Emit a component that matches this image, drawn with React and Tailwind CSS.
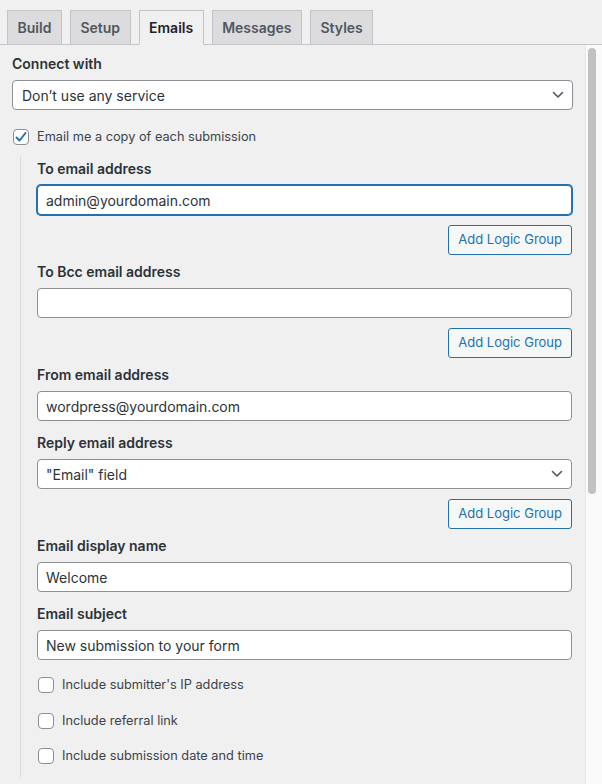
import React from 'react';

const tabs = ['Build', 'Setup', 'Emails', 'Messages', 'Styles'];

const Chevron = () => (
  <svg width="12" height="8" viewBox="0 0 12 8" fill="none" className="absolute right-[8px] top-1/2 -translate-y-1/2">
    <path d="M1.5 1.5 L6 6 L10.5 1.5" stroke="#50575e" strokeWidth="1.6" strokeLinecap="round" strokeLinejoin="round" />
  </svg>
);

const Label = ({ children }) => (
  <div className="text-[14px] leading-[20px] font-semibold text-[#2c3338]">{children}</div>
);

const TextField = ({ value, focused }) => (
  <div
    className={
      focused
        ? 'mt-[6px] h-[30px] rounded-[4px] border border-[#2271b1] ring-1 ring-[#2271b1] bg-white px-[8px] flex items-center text-[14px] text-[#2c3338]'
        : 'mt-[6px] h-[30px] rounded-[4px] border border-[#8c8f94] bg-white px-[8px] flex items-center text-[14px] text-[#2c3338]'
    }
  >
    {value}
  </div>
);

const SelectField = ({ value, pad = 'px-[8px]' }) => (
  <div className={`relative mt-[6px] h-[30px] rounded-[4px] border border-[#8c8f94] bg-white ${pad} flex items-center text-[14px] text-[#2c3338]`}>
    {value}
    <Chevron />
  </div>
);

const LogicButton = () => (
  <div className="flex justify-end mt-[10px]">
    <button className="h-[30px] px-[9px] rounded-[3px] border border-[#2271b1] bg-[#f6f7f7] text-[13px] text-[#2271b1]">
      Add Logic Group
    </button>
  </div>
);

const Checkbox = ({ checked }) => (
  <span className="w-[16px] h-[16px] shrink-0 rounded-[4px] border border-[#8c8f94] bg-white flex items-center justify-center">
    {checked && (
      <svg width="14" height="14" viewBox="0 0 14 14" fill="none">
        <path d="M2.5 7.5 L5.6 10.5 L11.5 3" stroke="#2271b1" strokeWidth="2" strokeLinecap="round" strokeLinejoin="round" />
      </svg>
    )}
  </span>
);

const CheckRow = ({ label, checked, className = '' }) => (
  <label className={`flex items-center gap-[8px] h-[20px] ${className}`}>
    <Checkbox checked={checked} />
    <span className="text-[12.75px] text-[#3c434a]">{label}</span>
  </label>
);

export default function App() {
  return (
    <div className="w-[602px] h-[784px] bg-[#f0f0f1] overflow-hidden flex flex-col font-['Inter',sans-serif]">
      {/* Tabs */}
      <div className="flex gap-[8px] pl-[7px] pt-[10px] border-b border-[#c3c4c7] shrink-0">
        {tabs.map((t) => (
          <div
            key={t}
            className={
              t === 'Emails'
                ? 'h-[35px] -mb-px px-[9.5px] flex items-center border border-[#c3c4c7] border-b-[#f0f0f1] bg-[#f0f0f1] text-[14px] font-semibold text-[#1d2327]'
                : 'h-[35px] -mb-px px-[9.5px] flex items-center border border-[#c3c4c7] bg-[#dcdcde] text-[14px] font-semibold text-[#50575e]'
            }
          >
            {t}
          </div>
        ))}
      </div>

      <div className="flex flex-1 min-h-0">
        {/* Form */}
        <div className="flex-1 pl-[12px] pr-[12px] pt-[9px]">
          <Label>Connect with</Label>
          <SelectField value="Don’t use any service" pad="pl-[9px] pr-[8px]" />
          <CheckRow className="mt-[17px] pl-[1px]" checked label="Email me a copy of each submission" />

          <div className="ml-[8px] mr-[1px] mt-[9px] border-l border-[#dcdcde] pl-[16px] pt-[3px] pb-[11px]">
            <Label>To email address</Label>
            <TextField value="admin@yourdomain.com" focused />
            <LogicButton />

            <div className="mt-[7px]">
              <Label>To Bcc email address</Label>
              <TextField value="" />
              <LogicButton />
            </div>

            <div className="mt-[7px]">
              <Label>From email address</Label>
              <TextField value="wordpress@yourdomain.com" />
            </div>

            <div className="mt-[12px]">
              <Label>Reply email address</Label>
              <SelectField value={'"Email" field'} />
              <LogicButton />
            </div>

            <div className="mt-[7px]">
              <Label>Email display name</Label>
              <TextField value="Welcome" />
            </div>

            <div className="mt-[12px]">
              <Label>Email subject</Label>
              <TextField value="New submission to your form" />
            </div>

            <div className="mt-[15px] pl-[1px] flex flex-col gap-[15.5px]">
              <CheckRow label="Include submitter's IP address" />
              <CheckRow label="Include referral link" />
              <CheckRow label="Include submission date and time" />
            </div>
          </div>
        </div>

        {/* Scrollbar */}
        <div className="w-[17px] shrink-0 border-l border-[#e6e6e6] bg-[#fafafa] pt-[3px] pl-[2px]">
          <div className="w-[8px] h-[446px] rounded-full bg-[#c1c1c1]" />
        </div>
      </div>
    </div>
  );
}
